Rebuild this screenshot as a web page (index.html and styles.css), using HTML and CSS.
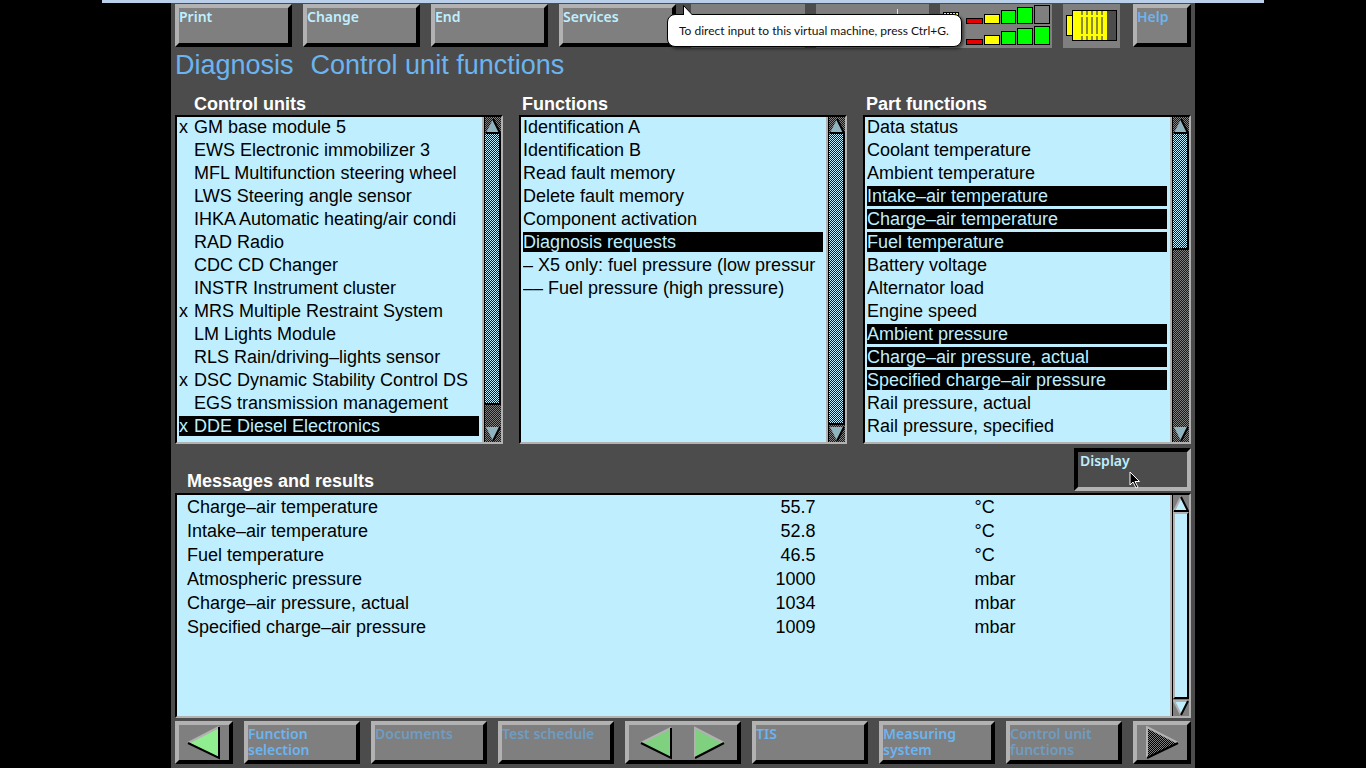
FILE: index.html
```html
<!DOCTYPE html>
<html lang="en">
<head>
<meta charset="utf-8">
<title>Diagnosis - Control unit functions</title>
<link rel="stylesheet" href="styles.css">
</head>
<body>
<div class="host-bar"></div>
<main class="screen">
  <nav class="toolbar">
    <button class="key pale">Print</button>
    <button class="key pale">Change</button>
    <button class="key pale">End</button>
    <button class="key pale">Services</button>
    <div class="plate first"></div>
    <div class="plate"><svg class="fill" viewBox="0 0 113 44"><path d="M81.500 5v8" stroke="#bfefff"/></svg></div>
    <div class="plate">
      <svg class="fill" viewBox="0 0 112 44" shape-rendering="crispEdges">
        <path d="M3 8h15v30H3z" fill="#ff0" stroke="#000"/><path d="M6 9v4M9 9v4M12 9v4M15 9v4" stroke="#000"/>
        <g stroke="#000">
          <path d="M26.500 14.500h16v5h-16zM26.500 35.500h16v5h-16z" fill="#e80000"/>
          <path d="M44.500 10.500h15v9h-15zM44.500 31.500h15v9h-15z" fill="#ff0"/>
          <path d="M61.500 6.500h14v13h-14zM77.500 3.500h15v16h-15zM61.500 27.500h14v13h-14zM77.500 24.500h15v16h-15zM94.500 22.500h15v18h-15z" fill="#0f0"/>
          <path d="M94.500 1.500h15v18h-15z" fill="#7f7f7f"/>
        </g>
      </svg>
    </div>
    <div class="plate">
      <svg class="fill" viewBox="0 0 57 44" shape-rendering="crispEdges">
        <path d="M3.500 11.500h6v20h-6z" fill="#ff0" stroke="#000"/>
        <path d="M9.500 6.500h44v30h-44z" fill="#4c4c4c" stroke="#000"/>
        <path d="M10 7h34v29H10z" fill="#ff0"/>
        <path d="M19 7v4M24 7v4M29 7v4M34 7v4M39 7v4M19 13v17M24 13v17M29 13v17M34 13v17M39 13v17M19 32v4M24 32v4M29 32v4M34 32v4M39 32v4" stroke="#8c8c30" stroke-width="2"/>
      </svg>
    </div>
    <button class="key help">Help</button>
    <div class="tip" role="tooltip">
      <svg class="tip-tail" viewBox="0 0 12 12"><path d="M1.500 11V1.500L10.500 11" fill="#fff" stroke="#000"/><path d="M2 11.500h8" stroke="#fff"/></svg>
      To direct input to this virtual machine, press Ctrl+G.
    </div>
  </nav>

  <h1 class="title"><span>Diagnosis</span><span>Control unit functions</span></h1>

  <div class="columns">
    <section>
      <h2 class="heading marked">Control units</h2>
      <div class="panel">
        <ul class="list" role="listbox" aria-label="Control units">
          <li><i>x</i>GM base module 5</li>
          <li><i></i>EWS Electronic immobilizer 3</li>
          <li><i></i>MFL Multifunction steering wheel</li>
          <li><i></i>LWS Steering angle sensor</li>
          <li><i></i>IHKA Automatic heating/air condi</li>
          <li><i></i>RAD Radio</li>
          <li><i></i>CDC CD Changer</li>
          <li><i></i>INSTR Instrument cluster</li>
          <li><i>x</i>MRS Multiple Restraint System</li>
          <li><i></i>LM Lights Module</li>
          <li><i></i>RLS Rain/driving–lights sensor</li>
          <li><i>x</i>DSC Dynamic Stability Control DS</li>
          <li><i></i>EGS transmission management</li>
          <li class="on"><i>x</i>DDE Diesel Electronics</li>
        </ul>
        <div class="scroll dim">
          <button class="step" aria-label="Up"><svg viewBox="0 0 16 16"><path class="face" d="M8 1L1 15h14z"/><path class="lit" d="M8 1L1 15"/><path class="shade" d="M8 1l7 14H1"/></svg></button>
          <div class="track"><div class="thumb most"></div></div>
          <button class="step" aria-label="Down"><svg viewBox="0 0 16 16"><path class="face" d="M1 1h14L8 15z"/><path class="lit" d="M15 1H1l7 14"/><path class="shade" d="M15 1L8 15"/></svg></button>
        </div>
      </div>
    </section>
    <section>
      <h2 class="heading">Functions</h2>
      <div class="panel">
        <ul class="list" role="listbox" aria-label="Functions">
          <li>Identification A</li>
          <li>Identification B</li>
          <li>Read fault memory</li>
          <li>Delete fault memory</li>
          <li>Component activation</li>
          <li class="on">Diagnosis requests</li>
          <li>– X5 only: fuel pressure (low pressur</li>
          <li>–– Fuel pressure (high pressure)</li>
        </ul>
        <div class="scroll dim">
          <button class="step" aria-label="Up"><svg viewBox="0 0 16 16"><path class="face" d="M8 1L1 15h14z"/><path class="lit" d="M8 1L1 15"/><path class="shade" d="M8 1l7 14H1"/></svg></button>
          <div class="track"><div class="thumb"></div></div>
          <button class="step" aria-label="Down"><svg viewBox="0 0 16 16"><path class="face" d="M1 1h14L8 15z"/><path class="lit" d="M15 1H1l7 14"/><path class="shade" d="M15 1L8 15"/></svg></button>
        </div>
      </div>
    </section>
    <section>
      <h2 class="heading">Part functions</h2>
      <div class="panel">
        <ul class="list" role="listbox" aria-label="Part functions">
          <li>Data status</li>
          <li>Coolant temperature</li>
          <li>Ambient temperature</li>
          <li class="on">Intake–air temperature</li>
          <li class="on">Charge–air temperature</li>
          <li class="on">Fuel temperature</li>
          <li>Battery voltage</li>
          <li>Alternator load</li>
          <li>Engine speed</li>
          <li class="on">Ambient pressure</li>
          <li class="on">Charge–air pressure, actual</li>
          <li class="on">Specified charge–air pressure</li>
          <li>Rail pressure, actual</li>
          <li>Rail pressure, specified</li>
        </ul>
        <div class="scroll dim">
          <button class="step" aria-label="Up"><svg viewBox="0 0 16 16"><path class="face" d="M8 1L1 15h14z"/><path class="lit" d="M8 1L1 15"/><path class="shade" d="M8 1l7 14H1"/></svg></button>
          <div class="track"><div class="thumb part"></div></div>
          <button class="step" aria-label="Down"><svg viewBox="0 0 16 16"><path class="face" d="M1 1h14L8 15z"/><path class="lit" d="M15 1H1l7 14"/><path class="shade" d="M15 1L8 15"/></svg></button>
        </div>
      </div>
    </section>
  </div>

  <div class="results-head">
    <h2 class="heading">Messages and results</h2>
    <button class="key pale pressed">Display
      <svg class="cursor" viewBox="0 0 12 18"><path d="M1 1v13l3-3 3 6 2-1-3-5.500h4.500z" fill="#000" stroke="#fff"/></svg>
    </button>
  </div>
  <div class="panel results">
    <div class="sheet">
      <table>
        <colgroup><col class="c-name"><col class="c-value"><col></colgroup>
        <tbody>
          <tr><td>Charge–air temperature</td><td>55.7</td><td>°C</td></tr>
          <tr><td>Intake–air temperature</td><td>52.8</td><td>°C</td></tr>
          <tr><td>Fuel temperature</td><td>46.5</td><td>°C</td></tr>
          <tr><td>Atmospheric pressure</td><td>1000</td><td>mbar</td></tr>
          <tr><td>Charge–air pressure, actual</td><td>1034</td><td>mbar</td></tr>
          <tr><td>Specified charge–air pressure</td><td>1009</td><td>mbar</td></tr>
        </tbody>
      </table>
    </div>
    <div class="scroll">
      <button class="step" aria-label="Up"><svg viewBox="0 0 16 16"><path class="face" d="M8 1L1 15h14z"/><path class="lit" d="M8 1L1 15"/><path class="shade" d="M8 1l7 14H1"/></svg></button>
      <div class="track"><div class="thumb"></div></div>
      <button class="step" aria-label="Down"><svg viewBox="0 0 16 16"><path class="face" d="M1 1h14L8 15z"/><path class="lit" d="M15 1H1l7 14"/><path class="shade" d="M15 1L8 15"/></svg></button>
    </div>
  </div>

  <nav class="footer">
    <button class="key arrow" aria-label="Back"><svg viewBox="0 0 34 34"><path d="M1 17L32 2v30z" fill="#90ee90"/><path d="M1 17L32 1" stroke="#b2b2b2" stroke-width="2"/><path d="M32 1v31L1 17" fill="none" stroke="#000" stroke-width="2"/></svg></button>
    <button class="key">Function selection</button>
    <button class="key" disabled><span>Documents</span></button>
    <button class="key" disabled><span>Test schedule</span></button>
    <button class="key arrow pair" aria-label="Previous and next">
      <svg viewBox="0 0 34 34"><path d="M1 17L31 3v28z" fill="#7fd07f"/><path d="M1 17L31 2" stroke="#b2b2b2" stroke-width="2"/><path d="M31 2v30L1 17" fill="none" stroke="#000" stroke-width="2"/></svg>
      <svg viewBox="0 0 34 34"><path d="M3 3l29 14L3 31z" fill="#7fd07f"/><path d="M3 32V2l29 15" fill="none" stroke="#b2b2b2" stroke-width="2"/><path d="M3 32l29-15" stroke="#000" stroke-width="2"/></svg>
    </button>
    <button class="key">TIS</button>
    <button class="key">Measuring system</button>
    <button class="key" disabled><span>Control unit functions</span></button>
    <button class="key arrow" aria-label="Forward"><svg viewBox="0 0 34 34"><defs><pattern id="mesh" width="2" height="2" patternUnits="userSpaceOnUse"><path d="M0 0h2v2H0z" fill="#7f7f7f"/><path d="M0 0h1v1H0zM1 1h1v1H1z" fill="#000" shape-rendering="crispEdges"/></pattern></defs><path d="M2 2l31 15L2 32z" fill="url(#mesh)"/><path d="M2 32V1l31 16" fill="none" stroke="#b2b2b2" stroke-width="2"/><path d="M2 32l31-15" stroke="#000" stroke-width="2"/></svg></button>
  </nav>
</main>
</body>
</html>
```
FILE: styles.css
```css
:root {
  --ground: #4c4c4c;
  --metal: #7f7f7f;
  --light: #b2b2b2;
  --sky: #bfefff;
  --blue: #6cb4f0;
  /* one-pixel checker of black squares, clear between them */
  --checker: url("data:image/svg+xml,%3Csvg xmlns='http://www.w3.org/2000/svg' width='8' height='8' shape-rendering='crispEdges'%3E%3Cpath stroke='%23181818' stroke-dasharray='1' d='M0 .5h8M0 2.5h8M0 4.5h8M0 6.5h8'/%3E%3Cpath stroke='%23181818' stroke-dasharray='1' d='M1 1.5h7M1 3.5h7M1 5.5h7M1 7.5h7'/%3E%3C/svg%3E");
}

* { box-sizing: border-box; }

body {
  margin: 0;
  padding: 0 171px;
  background: #000;
  font-family: "Liberation Sans", Arial, sans-serif;
  font-size: 18px;
}

h1, h2, ul { margin: 0; padding: 0; }

.host-bar {
  position: absolute;
  top: 0;
  left: 102px;
  right: 102px;
  height: 3px;
  background: #b9cfea;
}

.screen {
  display: flex;
  flex-direction: column;
  min-height: 100vh;
  padding: 4px;
  background: var(--ground);
}

.key {
  height: 43px;
  padding: 1px 0 0;
  border: 4px solid;
  border-color: var(--light) #000 #000 var(--light);
  border-radius: 0;
  background: var(--metal);
  color: var(--blue);
  display: flex;
  align-items: flex-start;
  text-align: left;
  font: 600 14px/16px "Noto Sans", sans-serif;
}
.key.pale { color: var(--sky); }

.key:disabled { color: #709cc0; }

.key.arrow { align-items: center; justify-content: center; }
.key.arrow svg { width: 34px; height: 34px; }
.key.pair { gap: 18px; }

.key.pressed {
  position: relative;
  width: 117px;
  padding-left: 2px;
  border-color: #000 var(--light) var(--light) #000;
  background: var(--ground);
}

.cursor {
  position: absolute;
  left: 51px;
  top: 19px;
  width: 12px;
  height: 18px;
}

.toolbar {
  position: relative;
  display: grid;
  grid-template-columns: repeat(4, 117fr) 118fr 113fr 112fr 57fr 60fr;
  gap: 11px;
  height: 44px;
}

.plate { height: 44px; background: var(--metal); }
.plate.first { margin-left: 4px; }
.help { margin-left: 2px; }
.fill { display: block; width: 100%; height: 100%; }

.tip {
  position: absolute;
  left: 492px;
  top: 10px;
  height: 33px;
  padding: 0 12px 0 11px;
  border: 1px solid #000;
  border-radius: 8px;
  background: #fff;
  color: #111;
  box-shadow: 2px 2px 3px rgba(0, 0, 0, 0.5);
  font: 12px/31px Lato, sans-serif;
  white-space: nowrap;
}
.tip-tail { position: absolute; left: 14px; top: -11px; width: 12px; height: 12px; }

.title {
  display: flex;
  gap: 17px;
  height: 45px;
  color: var(--blue);
  font-size: 27px;
  font-weight: 400;
  line-height: 34px;
}

.columns {
  display: grid;
  grid-template-columns: repeat(3, 1fr);
  gap: 16px;
}

.heading {
  padding-left: 3px;
  color: #fff;
  font-size: 18px;
  line-height: 22px;
}
.heading.marked { padding-left: 19px; }

.panel {
  display: flex;
  border: 2px solid;
  border-color: #000 var(--light) var(--light) #000;
  background: var(--sky);
}

.list {
  flex: 1;
  min-width: 0;
  height: 325px;
  padding: 0 3px 0 2px;
  overflow: hidden;
  list-style: none;
}
.list li {
  height: 20px;
  margin-bottom: 3px;
  overflow: hidden;
  white-space: nowrap;
  font-size: 18px;
  line-height: 20px;
}
.list i { display: inline-block; width: 15px; font-style: normal; }
.list .on { background: #000; color: var(--sky); }

.scroll {
  display: flex;
  flex-direction: column;
  width: 19px;
  border-left: 2px solid var(--light);
  background: var(--metal);
}
.step {
  height: 17px;
  padding: 0;
  border: 0;
  border-left: 1px solid #000;
  background: none;
}
.step svg { display: block; width: 16px; height: 16px; }
.face { fill: var(--sky); }
.lit { fill: none; stroke: var(--light); stroke-width: 2; }
.shade { fill: none; stroke: #000; stroke-width: 2; }
.track { flex: 1; border-left: 1px solid #000; }
.thumb {
  height: 100%;
  border: 2px solid;
  border-color: var(--light) #000 #000 var(--light);
  background: var(--sky);
}

.dim { background: var(--metal) var(--checker); }
.dim .lit { stroke: none; }
.dim .face { fill: #8fb3bf; }
.dim .thumb {
  border-width: 0 2px 2px 0;
  background: var(--sky) var(--checker);
}
.dim .most { height: 93%; }
.dim .part { height: 40%; }

.results-head {
  display: flex;
  justify-content: space-between;
  align-items: flex-end;
  margin: 4px 0 2px;
}
.results-head .heading { padding-left: 12px; line-height: 20px; }

.results { flex: 1; margin-bottom: 3px; }
.sheet { flex: 1; }
.sheet table { width: 100%; table-layout: fixed; border-collapse: collapse; }
.sheet td { height: 24px; padding: 0; line-height: 24px; font-size: 18px; }
.sheet td:first-child { padding-left: 10px; }
.sheet td:nth-child(2) { text-align: right; }
.sheet td:nth-child(3) { padding-left: 159px; }
.c-name { width: 50%; }
.c-value { width: 14.3%; }

.footer {
  display: grid;
  grid-template-columns: 58fr repeat(7, 116fr) 58fr;
  gap: 11px;
}
```
